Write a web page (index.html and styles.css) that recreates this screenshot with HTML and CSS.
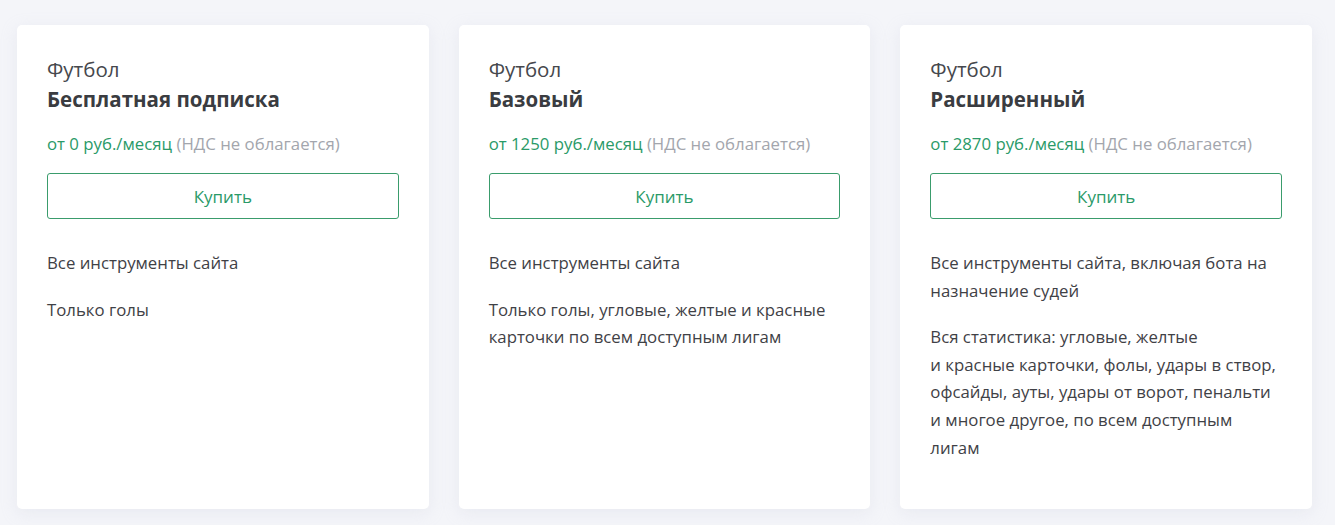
FILE: index.html
```html
<!DOCTYPE html>
<html lang="ru">
<head>
<meta charset="utf-8">
<title>Тарифы</title>
<link rel="stylesheet" href="styles.css">
</head>
<body>
<div class="plans">
  <div class="card">
    <div class="sport">Футбол</div>
    <div class="name">Бесплатная подписка</div>
    <div class="price"><span class="cost">от 0 руб./месяц</span> <span class="vat">(НДС не облагается)</span></div>
    <button class="buy">Купить</button>
    <div class="features">
      <p>Все инструменты сайта</p>
      <p>Только голы</p>
    </div>
  </div>
  <div class="card">
    <div class="sport">Футбол</div>
    <div class="name">Базовый</div>
    <div class="price"><span class="cost">от 1250 руб./месяц</span> <span class="vat">(НДС не облагается)</span></div>
    <button class="buy">Купить</button>
    <div class="features">
      <p>Все инструменты сайта</p>
      <p>Только голы, угловые, желтые и красные карточки по всем доступным лигам</p>
    </div>
  </div>
  <div class="card">
    <div class="sport">Футбол</div>
    <div class="name">Расширенный</div>
    <div class="price"><span class="cost">от 2870 руб./месяц</span> <span class="vat">(НДС не облагается)</span></div>
    <button class="buy">Купить</button>
    <div class="features">
      <p>Все инструменты сайта, включая бота на назначение судей</p>
      <p>Вся статистика: угловые, желтые<br>и&nbsp;красные карточки, фолы, удары в створ, офсайды, ауты, удары от ворот, пенальти и&nbsp;многое другое, по всем доступным лигам</p>
    </div>
  </div>
</div>
</body>
</html>
```
FILE: styles.css
```css
* { box-sizing: border-box; }
html, body { margin: 0; }
body {
  background: #f4f5f9;
  font-family: "Open Sans", "Noto Sans", sans-serif;
  color: #3f4146;
  height: 525px;
  overflow: hidden;
}
.plans {
  display: grid;
  grid-template-columns: repeat(3, 1fr);
  gap: 30px;
  padding: 25px 23px 0 17px;
}
.card {
  background: #ffffff;
  border-radius: 5px;
  box-shadow: 0 4px 16px rgba(200, 205, 220, 0.25);
  padding: 30px 30px 40px;
  height: 484px;
}
.sport {
  font-size: 20.5px;
  line-height: 28px;
  color: #46484d;
}
.name {
  font-size: 20.5px;
  font-weight: 700;
  line-height: 32px;
  color: #3a3c41;
}
.price {
  margin-top: 17px;
  font-size: 16.8px;
  line-height: 24px;
}
.cost { color: #2a9a68; }
.vat { color: #a3a6ad; }
.buy {
  display: block;
  width: 100%;
  height: 46px;
  margin-top: 17px;
  background: #fff;
  border: 1px solid #3a9c6c;
  border-radius: 3px;
  color: #2a9a68;
  font-family: inherit;
  font-size: 17px;
}
.features {
  margin-top: 30px;
  font-size: 16.8px;
  line-height: 27.6px;
}
.features p { margin: 0 0 19px; }
.features p:last-child { margin-bottom: 0; }
```
